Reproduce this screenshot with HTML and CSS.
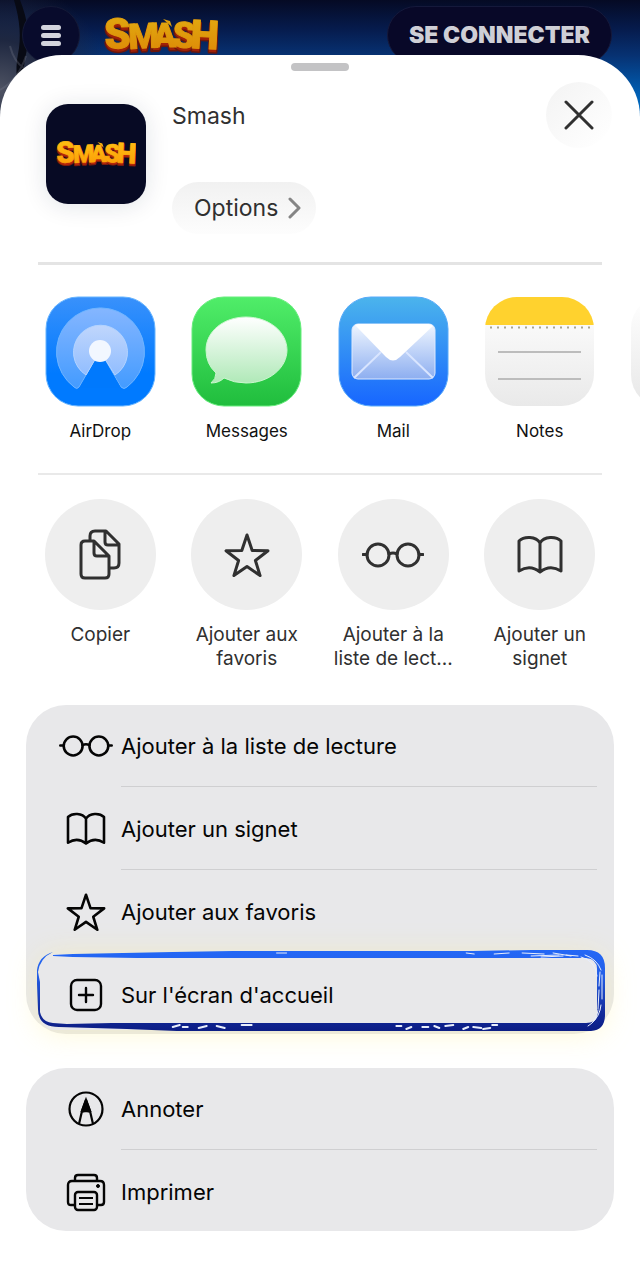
FILE: index.html
```html
<!DOCTYPE html>
<html lang="fr">
<head>
<meta charset="utf-8">
<meta name="viewport" content="width=device-width, initial-scale=1">
<title>Smash</title>
<link rel="stylesheet" href="styles.css">
</head>
<body>
<svg class="defs" aria-hidden="true">
  <defs>
    <linearGradient id="gold" x1="0" y1="0" x2="0" y2="1"><stop offset="0" stop-color="#ffc414"/><stop offset="1" stop-color="#fb9806"/></linearGradient>
    <symbol id="logo" viewBox="0 0 114 40">
      <g class="logo-back"><text x="1" y="36" font-size="42" rotate="-3">S</text><text x="25" y="36" font-size="35" rotate="-3">M</text><text x="49" y="34" font-size="34">A</text><text x="68" y="34" font-size="36" rotate="3">S</text><text x="86" y="35" font-size="40" rotate="3">H</text></g>
      <g class="logo-front"><text x="1" y="33" font-size="42" rotate="-3">S</text><text x="25" y="33" font-size="35" rotate="-3">M</text><text x="49" y="31" font-size="34">A</text><text x="68" y="31" font-size="36" rotate="3">S</text><text x="86" y="32" font-size="40" rotate="3">H</text></g>
      <path d="M59 3l7 2 2 6z" fill="#fdb50d"/>
    </symbol>
    <symbol id="glasses" viewBox="0 0 62 42"><g fill="none" stroke="currentColor"><circle cx="16" cy="21" r="11"/><circle cx="46" cy="21" r="11"/><path d="M27 20q4-2 8 0M1 20.500h4M57 20.500h4" stroke-linecap="round"/></g></symbol>
    <symbol id="book" viewBox="0 0 46 42"><path d="M23 9C19 2 7 2 2 7v30q11-7 21 1 10-8 21-1V7C39 2 27 2 23 9zM23 9v29" fill="none" stroke="currentColor" stroke-linejoin="round"/></symbol>
    <symbol id="star" viewBox="0 0 46 44"><path d="M23 2l5.200 15.500 15.800.300-12.600 9.700 4.700 15.100L23 33.500 9.900 42.600l4.700-15.100L2 17.800l15.800-.300z" fill="none" stroke="currentColor" stroke-linejoin="round"/></symbol>
  </defs>
</svg>

<header class="site-bar">
  <svg class="scenery" viewBox="0 0 100 118" aria-hidden="true"><path d="M14 0q9 30 4 54t6 64h6q-10-40-4-64T20 0z" fill="#080a14"/><path d="M0 90q18-10 26-34M24 68q-10-6-14-22" fill="none" stroke="#777b8c" stroke-width="2" opacity=".3"/></svg>
  <button class="menu" aria-label="Menu"><span></span><span></span><span></span></button>
  <svg class="site-logo" role="img" aria-label="Smash"><use href="#logo"/></svg>
  <button class="login">SE CONNECTER</button>
</header>

<main class="sheet">
  <div class="grabber"></div>
  <div class="site-info">
    <div class="app-icon"><svg role="img" aria-label="Smash"><use href="#logo"/></svg></div>
    <div class="site-text">
      <h1>Smash</h1>
      <button class="options">Options <svg width="14" height="24" viewBox="0 0 14 24" aria-hidden="true"><path d="M2 3l9 9-9 9" fill="none" stroke="#858585" stroke-width="3" stroke-linecap="round" stroke-linejoin="round"/></svg></button>
    </div>
    <button class="close" aria-label="Fermer"><svg width="30" height="30" viewBox="0 0 30 30"><path d="M2 2l26 26M28 2L2 28" stroke="#303030" stroke-width="3" stroke-linecap="round"/></svg></button>
  </div>

  <section class="apps" aria-label="Applications">
    <button class="tile">
      <svg class="app" viewBox="0 0 111 111" aria-hidden="true">
        <defs><linearGradient id="air" x2="0" y2="1"><stop stop-color="#3991fb"/><stop offset=".7" stop-color="#007aff"/></linearGradient><linearGradient id="ring" x2="0" y2="1"><stop stop-color="#85b6ff"/><stop offset="1" stop-color="#439bff"/></linearGradient><linearGradient id="ring2" x2="0" y2="1"><stop stop-color="#c0d6fc"/><stop offset="1" stop-color="#91bdff"/></linearGradient></defs>
        <rect x="1" y="1" width="109" height="109" rx="32" fill="url(#air)" stroke="#66b4ff"/>
        <path d="M55 55L34 91Q32 94 29 91A44 44 0 1 1 82 91Q79 94 76 91z" fill="url(#ring)" stroke="#70b5ff"/>
        <path d="M55 55L41 79A27 27 0 1 1 70 79z" fill="url(#ring2)" stroke="#b4d4ff"/>
        <path d="M55 56L35 92h41z" fill="#0079fd"/>
        <circle cx="55" cy="55" r="11" fill="#f2f7ff"/>
      </svg>
      <span>AirDrop</span>
    </button>
    <button class="tile">
      <svg class="app" viewBox="0 0 111 111" aria-hidden="true">
        <defs><linearGradient id="green" x2="0" y2="1"><stop stop-color="#50ed69"/><stop offset="1" stop-color="#20bd3d"/></linearGradient><linearGradient id="bubble" x2="0" y2="1"><stop stop-color="#fff"/><stop offset="1" stop-color="#b0e9b8"/></linearGradient></defs>
        <rect x="1" y="1" width="109" height="109" rx="32" fill="url(#green)" stroke="#67ed7d"/>
        <path d="M55 21C33 21 15 35 15 54q0 14 10 23 0 6-5 10 8 0 13-5 10 5 22 5c23 0 41-15 41-33S78 21 55 21z" fill="url(#bubble)" stroke="#caf7ce"/>
      </svg>
      <span>Messages</span>
    </button>
    <button class="tile">
      <svg class="app" viewBox="0 0 111 111" aria-hidden="true">
        <defs><linearGradient id="mail" x2="0" y2="1"><stop stop-color="#4bb4ec"/><stop offset="1" stop-color="#1766ff"/></linearGradient><linearGradient id="env" x2="0" y2="1"><stop stop-color="#eff6ff"/><stop offset="1" stop-color="#8daef0"/></linearGradient></defs>
        <rect x="1" y="1" width="109" height="109" rx="32" fill="url(#mail)" stroke="#58aafa"/>
        <rect x="14" y="28" width="83" height="55" rx="6" fill="url(#env)" stroke="#dce9ff"/>
        <path d="M16 82l27-26M95 82L68 56" stroke="#d9e5ff" stroke-width="2"/>
        <path d="M17 29q2-1 4-1h69q3 0 5 2L62 61q-7 7-14 0z" fill="#fff"/>
      </svg>
      <span>Mail</span>
    </button>
    <button class="tile">
      <svg class="app" viewBox="0 0 111 111" aria-hidden="true">
        <defs><linearGradient id="paper" x2="0" y2="1"><stop stop-color="#fff"/><stop offset="1" stop-color="#e9e9e9"/></linearGradient><clipPath id="note"><rect x="1" y="1" width="109" height="109" rx="32"/></clipPath></defs>
        <g clip-path="url(#note)"><rect width="111" height="111" fill="url(#paper)"/><rect width="111" height="29" fill="#ffd22e"/></g>
        <path d="M6 31.500h101" stroke="#aaa58f" stroke-width="2" stroke-dasharray="2 5"/>
        <path d="M14 56h83M14 83h83" stroke="#bcbcbc" stroke-width="2"/>
      </svg>
      <span>Notes</span>
    </button>
    <button class="tile" aria-label="Plus"><span class="app app-next"></span></button>
  </section>

  <section class="quick" aria-label="Raccourcis">
    <button class="tile"><span class="disc"><svg width="44" height="52" viewBox="0 0 44 52" fill="none" stroke="currentColor" stroke-width="3" stroke-linejoin="round" aria-hidden="true"><path d="M12 12V7q0-5 5-5h11l13 13v19q0 5-5 5h-5M27 2v11q0 3 3 3h11"/><path d="M7 12h9l15 15v18q0 4-4 4H7q-4 0-4-4V16q0-4 4-4zM16 12v12q0 3 3 3h12"/></svg></span><span>Copier</span></button>
    <button class="tile"><span class="disc"><svg class="q-star" aria-hidden="true"><use href="#star"/></svg></span><span>Ajouter aux favoris</span></button>
    <button class="tile"><span class="disc"><svg class="q-glasses" aria-hidden="true"><use href="#glasses"/></svg></span><span>Ajouter à la<br>liste de lect...</span></button>
    <button class="tile"><span class="disc"><svg class="q-book" aria-hidden="true"><use href="#book"/></svg></span><span>Ajouter un signet</span></button>
  </section>

  <div class="group">
    <button class="row"><svg class="r-glasses" aria-hidden="true"><use href="#glasses"/></svg><span>Ajouter à la liste de lecture</span></button>
    <button class="row"><svg class="r-book" aria-hidden="true"><use href="#book"/></svg><span>Ajouter un signet</span></button>
    <button class="row before-marked"><svg class="r-star" aria-hidden="true"><use href="#star"/></svg><span>Ajouter aux favoris</span></button>
    <button class="row marked">
      <svg class="brush" viewBox="0 0 570 82" preserveAspectRatio="none" aria-hidden="true">
        <defs><linearGradient id="ink" gradientUnits="userSpaceOnUse" x1="0" y1="0" x2="0" y2="82"><stop stop-color="#2367f6"/><stop offset=".3" stop-color="#2460e8"/><stop offset=".75" stop-color="#132c9d"/><stop offset="1" stop-color="#0b1c84"/></linearGradient></defs>
        <path fill="url(#ink)" fill-rule="evenodd" d="M16 5l20-1 50-1 50-1 60-1h240l60-1h55q18 0 18 18v47q0 15-14 16H140l-50-2-68-2Q1 77 1 59L0 34V20Q2 6 16 2 3 8 1 22l2 10v30q2 10 13 11l14 1 45-1h475q11 0 11-9V19q0-10-11-11H100L36 7 16 6z"/>
        <g fill="none" stroke="#e8eefc" stroke-linecap="round"><path stroke-width="2" d="M136 77l7-2M146 77h5M162 78l8-2M180 76l8 2M205 75h10M360 76h5M370 79l5-2M386 77h6M398 76l5 2M409 76l8-1M427 79l5-2M437 77l8 1M447 79l7-1M456 75h5"/><path d="M240 3h10M430 3l8 1M458 4l15-1M486 3l22 1M495 6l28-1M517 3l18 3M505 7l22-1M530 5l12 1M545 7q14 3 16 19M549 5q12 4 16 15M564 22l-1 14M566 25v24M563 40l-1 19M565 55q-1 11-9 18M562 60q-1 11-10 16"/></g>
      </svg>
      <svg width="34" height="34" viewBox="0 0 34 34" fill="none" stroke="currentColor" stroke-width="2.400" stroke-linecap="round" aria-hidden="true"><rect x="2" y="2" width="30" height="30" rx="6"/><path d="M17 10v14M10 17h14"/></svg><span>Sur l'écran d'accueil</span>
    </button>
  </div>

  <div class="group">
    <button class="row"><svg width="36" height="36" viewBox="0 0 36 36" fill="none" stroke="currentColor" stroke-width="2.200" aria-hidden="true"><circle cx="18" cy="18" r="16.500"/><path d="M18 9l-4 11-3 13M18 9l4 11 3 13M13 21l5-1 5 1"/><path d="M18 9l-4 11h8z" fill="currentColor"/></svg><span>Annoter</span></button>
    <button class="row"><svg width="40" height="40" viewBox="0 0 40 40" fill="none" stroke="currentColor" stroke-width="2.400" stroke-linejoin="round" aria-hidden="true"><path d="M8 33H5q-3 0-3-3V13q0-4 4-4h28q4 0 4 4v17q0 3-3 3h-3M9 9V6q0-3 3-3h16q3 0 3 3v3"/><rect x="9" y="20" width="22" height="18" rx="3"/><path d="M13 26h14M13 32h14" stroke-width="2"/><circle cx="32" cy="14" r="1.500" fill="currentColor" stroke-width="1"/></svg><span>Imprimer</span></button>
  </div>
</main>
</body>
</html>
```
FILE: styles.css
```css
* { box-sizing: border-box; }
body {
  margin: 0;
  font-family: Inter, "Liberation Sans", sans-serif;
  background: #fff;
}
button {
  margin: 0;
  padding: 0;
  border: 0;
  background: none;
  font: inherit;
  color: inherit;
  cursor: pointer;
}
svg { display: block; flex: none; }
.defs { position: absolute; width: 0; height: 0; }

.logo-back, .logo-front {
  font-family: Roboto, sans-serif;
  font-weight: 900;
  paint-order: stroke;
  stroke-linejoin: round;
}
.logo-back { fill: #b52608; stroke: #7a1a0e; stroke-width: 3px; }
.logo-front { fill: url(#gold); stroke: #fca80a; stroke-width: 1px; }

/* Dimmed page behind the sheet */
.site-bar {
  position: relative;
  display: flex;
  align-items: flex-start;
  height: 118px;
  padding: 6px 28px 0 22px;
  background:
    radial-gradient(circle at 0 90px, #4e5363 0, #1e2740 50px, transparent 110px),
    linear-gradient(#050a24 0, #061c4e 30px, #073273 56px, #0060b5 95px, #0071c4 118px);
}
.scenery { position: absolute; left: 0; top: 0; width: 100px; height: 118px; }
.menu {
  position: relative;
  display: flex;
  flex-direction: column;
  align-items: center;
  justify-content: center;
  gap: 3px;
  width: 58px;
  height: 58px;
  border-radius: 50%;
  background: #080b2c;
  border: 1px solid #141936;
}
.menu span { width: 20px; height: 5px; border-radius: 3px; background: #d3d4dd; }
.site-logo { width: 114px; height: 40px; margin: 10px auto 0 24px; filter: brightness(.88); }
.login {
  height: 58px;
  padding: 0 21px;
  border-radius: 29px;
  border: 1px solid #15193b;
  background: #080828;
  color: #cfcfd6;
  font-size: 23px;
  font-weight: 900;
}

.sheet {
  position: relative;
  margin-top: -63px;
  padding: 8px 26px 48px;
  min-height: calc(100vh - 55px);
  border-radius: 62px 62px 0 0;
  background: #fff;
}
.grabber { width: 58px; height: 8px; margin: 0 auto; border-radius: 4px; background: #c3c3c5; }

.site-info {
  display: flex;
  align-items: flex-start;
  height: 194px;
  margin: 0 12px;
  padding: 11px 0 0 8px;
  border-bottom: 3px solid #e4e4e4;
}
.app-icon {
  display: grid;
  place-items: center;
  width: 100px;
  height: 100px;
  margin-top: 22px;
  border-radius: 22px;
  background: #070a24;
  box-shadow: 0 2px 24px rgba(20, 30, 60, .12);
}
.app-icon svg { width: 80px; height: 28px; }
.site-text { flex: 1; padding: 19px 0 0 26px; color: #303030; }
.site-text h1 { margin: 0; font-size: 23px; line-height: 30px; font-weight: 400; }
.options {
  display: flex;
  align-items: center;
  gap: 10px;
  height: 52px;
  margin-top: 51px;
  padding: 0 14px 0 22px;
  border-radius: 26px;
  background: linear-gradient(#f1f1f1, #fdfdfd);
  font-size: 23px;
}
.close {
  display: grid;
  place-items: center;
  width: 66px;
  height: 66px;
  margin-right: -10px;
  border-radius: 50%;
  background: linear-gradient(135deg, #f3f3f3, #fefefe 85%);
}

.apps, .quick { display: grid; grid-auto-flow: column; }
.tile { display: flex; flex-direction: column; align-items: center; justify-content: flex-start; gap: 12px; }

/* Scrolls sideways up to the window edge */
.apps {
  grid-auto-columns: calc((100% - 27px) / 4);
  margin: 0 -26px 0 1px;
  padding: 31px 0 32px;
  overflow-x: auto;
  overflow-y: hidden;
  scrollbar-width: none;
}
.app { width: 111px; height: 111px; }
.app-next { border-radius: 32px; background: linear-gradient(#fff, #e7e7e7); }
.apps .tile { font-size: 17px; line-height: 24px; color: #111; }

.quick {
  position: relative;
  grid-auto-columns: 25%;
  margin: 0 1px;
  padding-top: 24px;
  font-size: 19px;
  line-height: 24px;
  color: #303030;
}
.quick::before {
  content: "";
  position: absolute;
  left: 11px;
  right: 11px;
  top: -2px;
  height: 2px;
  background: #e9e9e9;
}
.quick .tile { gap: 13px; }
.quick .tile > span:last-child { max-width: 126px; }
.disc {
  display: grid;
  place-items: center;
  width: 111px;
  height: 111px;
  border-radius: 50%;
  background: #eee;
}
.q-star { width: 46px; height: 44px; stroke-width: 3px; }
.q-glasses { width: 62px; height: 42px; stroke-width: 3px; }
.q-book { width: 46px; height: 42px; stroke-width: 3px; }

.group {
  position: relative;
  margin-top: 34px;
  border-radius: 40px;
  background: #e8e8ea;
  color: #050505;
}
.row {
  position: relative;
  display: grid;
  grid-template-columns: 52px 1fr;
  gap: 9px;
  align-items: center;
  justify-items: center;
  width: 100%;
  padding: 20px 17px 21px 34px;
  font-size: 22px;
  line-height: 42px;
  text-align: left;
}
.row > span { justify-self: start; }
.row:not(:last-child):not(.before-marked)::after {
  content: "";
  position: absolute;
  left: 95px;
  right: 17px;
  bottom: 1px;
  height: 1px;
  background: #cfcfd1;
}
.row:last-child { padding-bottom: 18px; }
.r-glasses { width: 54px; height: 36px; stroke-width: 3px; }
.r-book { width: 40px; height: 36px; stroke-width: 3px; }
.r-star { width: 40px; height: 38px; stroke-width: 3px; }

/* Brush frame drawn around the highlighted action */
.marked { isolation: isolate; }
.marked::before {
  content: "";
  position: absolute;
  z-index: -2;
  inset: 0 10px 4px 13px;
  border-radius: 16px;
  background: #e8e8ea;
  box-shadow: 0 2px 30px rgba(255, 240, 140, .4);
}
.brush { position: absolute; z-index: -1; left: 11px; top: -4px; width: calc(100% - 19px); height: 82px; }
```
